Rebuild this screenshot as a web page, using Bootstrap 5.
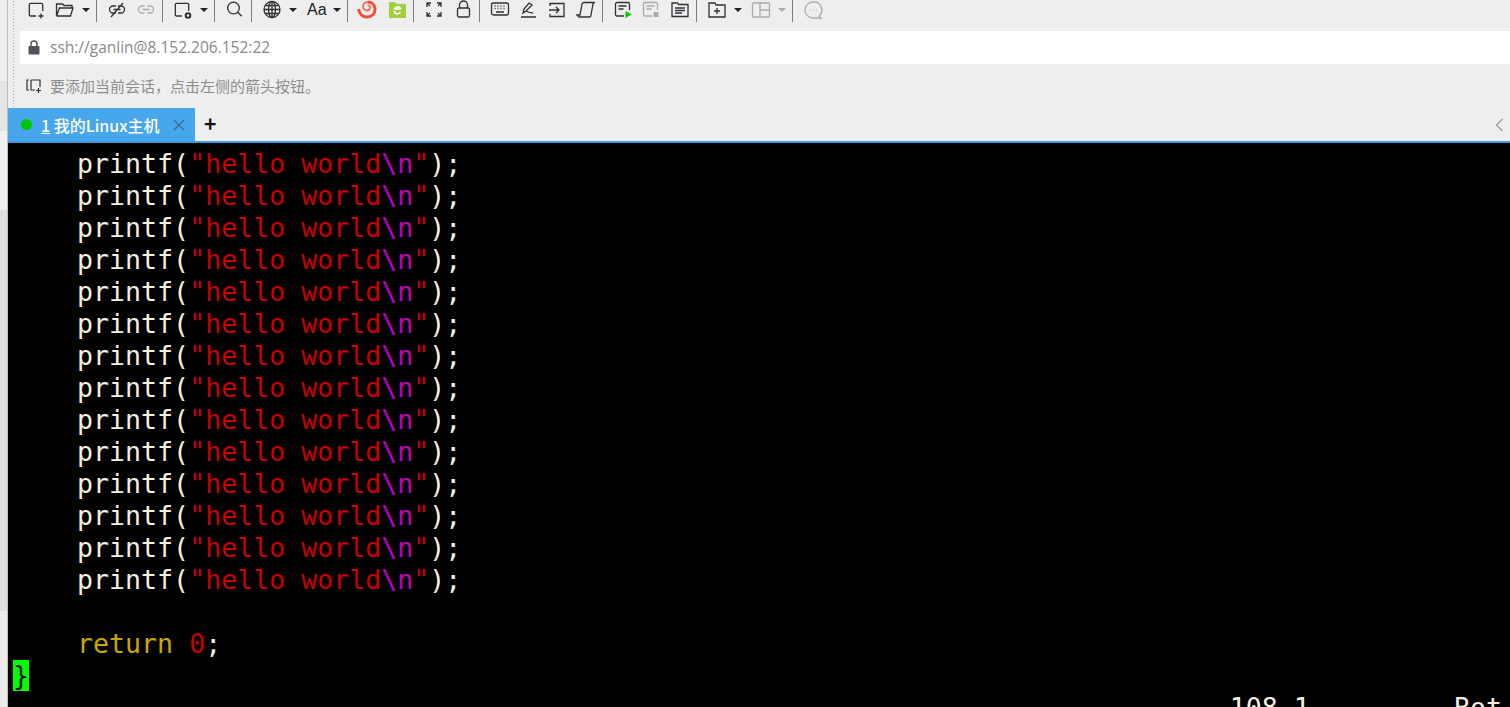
<!DOCTYPE html>
<html lang="zh">
<head>
<meta charset="utf-8">
<title>Xshell</title>
<link href="https://cdn.jsdelivr.net/npm/bootstrap@5.3.0/dist/css/bootstrap.min.css" rel="stylesheet">
<style>
html,body{height:707px;overflow:hidden;margin:0}
body{background:#f4f4f4;font-family:"Microsoft YaHei","Noto Sans CJK SC","Noto Sans",sans-serif}
.strip{width:8px;flex:none;background:linear-gradient(#efefef 0 81px,#e4e4e4 81px 131px,#f0f0f0 131px 210px,#dfdfdf 210px 611px,#ececec 611px);border-right:1px solid #bdbdbd}
.app{flex:1;min-width:0;height:707px;background:#eee}
.grip{width:3px;flex:none;margin-left:4px;background-image:radial-gradient(#a8a8a8 1px,transparent 1px);background-size:3px 3px;height:108px}
.tools{height:31px}
.tool-row{height:22px}
.tb{height:19px;margin-bottom:3px;display:flex;align-items:center;flex:none}
.tb svg{display:block;fill:none;stroke:#2f3136;stroke-width:1.3}
.tb svg.off{stroke:#a9abb0}
.tb svg.plain{stroke:none}
.sep{width:1px;height:22px;background:#7c7c7c;flex:none}
.caret{width:0;height:0;border-left:4px solid transparent;border-right:4px solid transparent;border-top:4px solid #222;flex:none;margin-bottom:3px}
.caret.off{border-top-color:#a9abb0}
.aa{font-family:"Liberation Sans",sans-serif;font-size:16px;color:#222;width:18px;white-space:nowrap}
.gl-5{margin-left:5px}.gl-6{margin-left:6px}.gl-7{margin-left:7px}.gl-8{margin-left:8px}.gl-9{margin-left:9px}.gl-10{margin-left:10px}.gl-11{margin-left:11px}.gl-12{margin-left:12px}
.addr{height:33px;background:#fff;color:#8a8a8a;font-size:15.5px;margin-left:5px;font-family:"Open Sans","Noto Sans",sans-serif}
.addr-text{margin-left:10px}
.lock{margin-left:8px}
.hint{height:44px;color:#8d8d8d;font-size:15px;padding-left:11px}
.hint-text{margin-left:6px}
.tabs{height:33px}
.tab-on{width:187px;height:33px;background:#47a7ec;color:#fff;font-size:16px;font-weight:500;padding-left:13px}
.dot{width:11px;height:11px;background:#00c800;border-radius:50%;flex:none}
.tab-title{margin-left:9px;white-space:nowrap}
.tab-x{margin-right:10px}
.plus{font-size:21px;font-weight:700;color:#111;line-height:1;margin-left:9px;margin-bottom:2px}
.chev{margin-right:6px}
.blue-line{height:2px;background:#3d9ae0;flex:none}
.term{background:#000;padding:5px 0 0 5px;flex:1;overflow:hidden;font-family:"DejaVu Sans Mono",monospace;font-size:26.6px;line-height:32px;color:#f6efe2;white-space:pre}
.term div{height:32px}
.c-str{color:#c80000}.c-esc{color:#c000c0}.c-key{color:#c8a800}
.cur{background:#00ff00;color:#111;display:inline-block;width:16px;height:31px}
</style>
</head>
<body class="d-flex">
<div class="strip"></div>
<div class="app d-flex flex-column">
 <div class="d-flex">
  <div class="grip"></div>
  <div class="flex-grow-1 min-w-0">
   <div class="tools">
    <div class="tool-row d-flex align-items-center">
     <span class="tb gl-12"><svg width="20" height="20" viewBox="0 0 20 20"><path d="M9 16H3.500a1.200 1.200 0 0 1-1.200-1.200V4.500a1.200 1.200 0 0 1 1.200-1.200h11a1.200 1.200 0 0 1 1.200 1.200V11M14 13.500v5M11.500 16h5"/></svg></span>
     <span class="tb gl-8"><svg width="20" height="20" viewBox="0 0 20 20"><path d="M1.500 16V4h6l1.500 1.500h8V8M1.500 16h14l2.500-8H4.500l-3 8"/></svg></span>
     <span class="caret gl-7"></span>
     <span class="sep gl-6"></span>
     <span class="tb gl-10"><svg width="20" height="20" viewBox="0 0 20 20"><path d="M9 6H6a3.500 3.500 0 0 0 0 7h3M11 6h3a3.500 3.500 0 0 1 0 7h-3M6.500 9.500h7M4 17 16 3"/></svg></span>
     <span class="tb gl-9"><svg class="off" width="20" height="20" viewBox="0 0 20 20"><path d="M8.500 6H6a3.500 3.500 0 0 0 0 7h2.500M11.500 6H14a3.500 3.500 0 0 1 0 7h-2.500M6.500 9.500h7"/></svg></span>
     <span class="sep gl-6"></span>
     <span class="tb gl-10"><svg width="20" height="20" viewBox="0 0 20 20"><path d="M9 16H3.500a1.200 1.200 0 0 1-1.200-1.200V4.500a1.200 1.200 0 0 1 1.200-1.200h11a1.200 1.200 0 0 1 1.200 1.200V11"/><circle cx="15" cy="15.500" r="2.300" stroke-width="2"/></svg></span>
     <span class="caret gl-7"></span>
     <span class="sep gl-6"></span>
     <span class="tb gl-10"><svg width="20" height="20" viewBox="0 0 20 20"><circle cx="8.500" cy="8" r="5.800"/><path d="m12.800 12.300 4 4"/></svg></span>
     <span class="sep gl-6"></span>
     <span class="tb gl-10"><svg width="20" height="20" viewBox="0 0 20 20"><circle cx="10" cy="9.500" r="8"/><ellipse cx="10" cy="9.500" rx="3.500" ry="8"/><path d="M2 9.500h16M3.200 5.500h13.600M3.200 13.500h13.600M10 1.500v16"/></svg></span>
     <span class="caret gl-7"></span>
     <span class="tb aa gl-10">Aa</span>
     <span class="caret gl-8"></span>
     <span class="sep gl-6"></span>
     <span class="tb gl-9"><svg class="plain" width="20" height="20" viewBox="0 0 20 20"><path d="M1.500 9c1 5 4 8 8.500 8 5 0 8-3.500 8-8 0-4-3-7-7-7" fill="none" stroke="#f0503a" stroke-width="3"/><path d="M11 2C8 2 6 4 6 6.500 6 9 8 10.500 10 10.500c2 0 3-1.500 3-3 0-1.500-1-2.500-2.500-2" fill="none" stroke="#f4694f" stroke-width="1.800"/></svg></span>
     <span class="tb gl-11"><svg class="plain" width="19" height="19" viewBox="0 0 19 19"><path fill="#a3cf3f" d="M1 2h6l2 2h9v14H1z"/><path d="M13 9a3.500 3.500 0 0 0-6.500 0H13M6 11a3.500 3.500 0 0 0 6.500 1" stroke="#fff" stroke-width="1.500" fill="none"/></svg></span>
     <span class="sep gl-6"></span>
     <span class="tb gl-10"><svg width="20" height="20" viewBox="0 0 20 20" stroke-width="1.800"><path d="M3 7V3h4M3 3l3 3M17 7V3h-4M17 3l-3 3M3 12v4h4M3 16l3-3M17 12v4h-4M17 16l-3-3"/></svg></span>
     <span class="tb gl-10"><svg width="20" height="20" viewBox="0 0 20 20"><rect x="3.500" y="8" width="12" height="9" rx="1.500"/><path d="M5.500 8V5a4 4 0 0 1 8 0v3"/></svg></span>
     <span class="sep gl-5"></span>
     <span class="tb gl-10"><svg width="20" height="20" viewBox="0 0 20 20"><rect x="1.500" y="3" width="17" height="12" rx="2"/><path d="M4.500 6h1M7.500 6h1M10.500 6h1M13.500 6h1M4.500 8.500h1M7.500 8.500h1M10.500 8.500h1M13.500 8.500h1M6 12h8" stroke-width="1.500"/></svg></span>
     <span class="tb gl-8"><svg width="20" height="20" viewBox="0 0 20 20"><path d="M3 17h15M5 13l1-4 5-6 3 2-6 6zM8 11c2 1 4 2 7 2"/></svg></span>
     <span class="tb gl-9"><svg width="20" height="20" viewBox="0 0 20 20"><path d="M3 6V3.500h14v13H3V14M2 10h10M9 7l3 3-3 3"/></svg></span>
     <span class="tb gl-9"><svg width="20" height="20" viewBox="0 0 20 20"><path d="M2 16c0 1 1 1 2 1h9c1 0 2-1 2-2l2-11c0-1 1-1.500 2-1.500H8C7 2.500 6.500 3 6 4l-2 11H1z"/></svg></span>
     <span class="sep gl-6"></span>
     <span class="tb gl-10"><svg width="20" height="20" viewBox="0 0 20 20"><path d="M11 16H4a1.500 1.500 0 0 1-1.500-1.500V4A1.500 1.500 0 0 1 4 2.500h11A1.500 1.500 0 0 1 16.500 4v6M5.500 6h8M5.500 9h5"/><path d="M12.500 11v7l6-3.500z" fill="#00c800" stroke="none"/></svg></span>
     <span class="tb gl-8"><svg class="off" width="20" height="20" viewBox="0 0 20 20"><path d="M11 16H4a1.500 1.500 0 0 1-1.500-1.500V4A1.500 1.500 0 0 1 4 2.500h11A1.500 1.500 0 0 1 16.500 4v6M5.500 6h8M5.500 9h5"/><rect x="12.500" y="12" width="5" height="5" fill="#a9abb0" stroke="none"/></svg></span>
     <span class="tb gl-9"><svg width="20" height="20" viewBox="0 0 20 20"><path d="M2 16.500V3h5.500l1 1.500h9.500v12zM5 8h10M5 10.500h10M5 13h7"/></svg></span>
     <span class="sep gl-6"></span>
     <span class="tb gl-10"><svg width="20" height="20" viewBox="0 0 20 20"><path d="M2 17V3h6l1 2h9v12zM10 8v6M7 11h6"/></svg></span>
     <span class="caret gl-7"></span>
     <span class="tb gl-9"><svg class="off" width="20" height="20" viewBox="0 0 20 20"><rect x="1.500" y="3" width="17" height="14" rx="1"/><path d="M9 3v14M9 10h9.500"/></svg></span>
     <span class="caret off gl-7"></span>
     <span class="sep gl-6"></span>
     <span class="tb gl-10"><svg class="off" width="20" height="20" viewBox="0 0 20 20"><path d="M10 2a8 8 0 1 0 0 16h8l-2-2a8 8 0 0 0-6-14zM7 10h.5M10 10h.5M13 10h.5"/></svg></span>
    </div>
   </div>
   <div class="addr d-flex align-items-center">
    <svg class="lock" width="12" height="15" viewBox="0 0 12 15"><path fill="none" stroke="#50535a" stroke-width="1.400" d="M3 7V4a3 3 0 0 1 6 0v3"/><rect x="0.500" y="6" width="11" height="8.500" rx="1" fill="#50535a"/></svg>
    <span class="addr-text">ssh://ganlin@8.152.206.152:22</span>
   </div>
   <div class="hint d-flex align-items-center">
    <svg width="18" height="18" viewBox="0 0 18 18" fill="none" stroke="#2f3136" stroke-width="1.200"><path d="M3 3H1v10h2M5 3h9v7M5 3v10h4M12.500 11v5M10 13.500h5"/></svg>
    <span class="hint-text">要添加当前会话，点击左侧的箭头按钮。</span>
   </div>
  </div>
 </div>
 <div class="tabs d-flex align-items-center">
  <div class="tab-on d-flex align-items-center">
   <span class="dot"></span>
   <span class="tab-title"><u>1</u> 我的Linux主机</span>
   <svg class="tab-x ms-auto" width="12" height="12" viewBox="0 0 12 12" fill="none" stroke="#3f6585" stroke-width="1.100"><path d="m1 1 10 10M11 1 1 11"/></svg>
  </div>
  <span class="plus">+</span>
  <svg class="ms-auto chev" width="9" height="14" viewBox="0 0 9 14" fill="none" stroke="#9a9da6" stroke-width="1.300"><path d="M7.500 1 1.500 7l6 6"/></svg>
 </div>
 <div class="blue-line"></div>
 <div class="term" id="code"></div>
</div>
<script src="https://cdn.jsdelivr.net/npm/bootstrap@5.3.0/dist/js/bootstrap.bundle.min.js"></script>
<script>
var line='    printf(<span class="c-str">"hello world</span><span class="c-esc">\\n</span><span class="c-str">"</span>);';
var h='';for(var i=0;i<14;i++)h+='<div>'+line+'</div>';
h+='<div></div><div>    <span class="c-key">return</span> <span class="c-str">0</span>;</div><div><span class="cur">}</span></div>';
h+='<div>'+' '.repeat(76)+'108,1'+' '.repeat(9)+'Bot</div>';
document.getElementById('code').innerHTML=h;
</script>
</body>
</html>
